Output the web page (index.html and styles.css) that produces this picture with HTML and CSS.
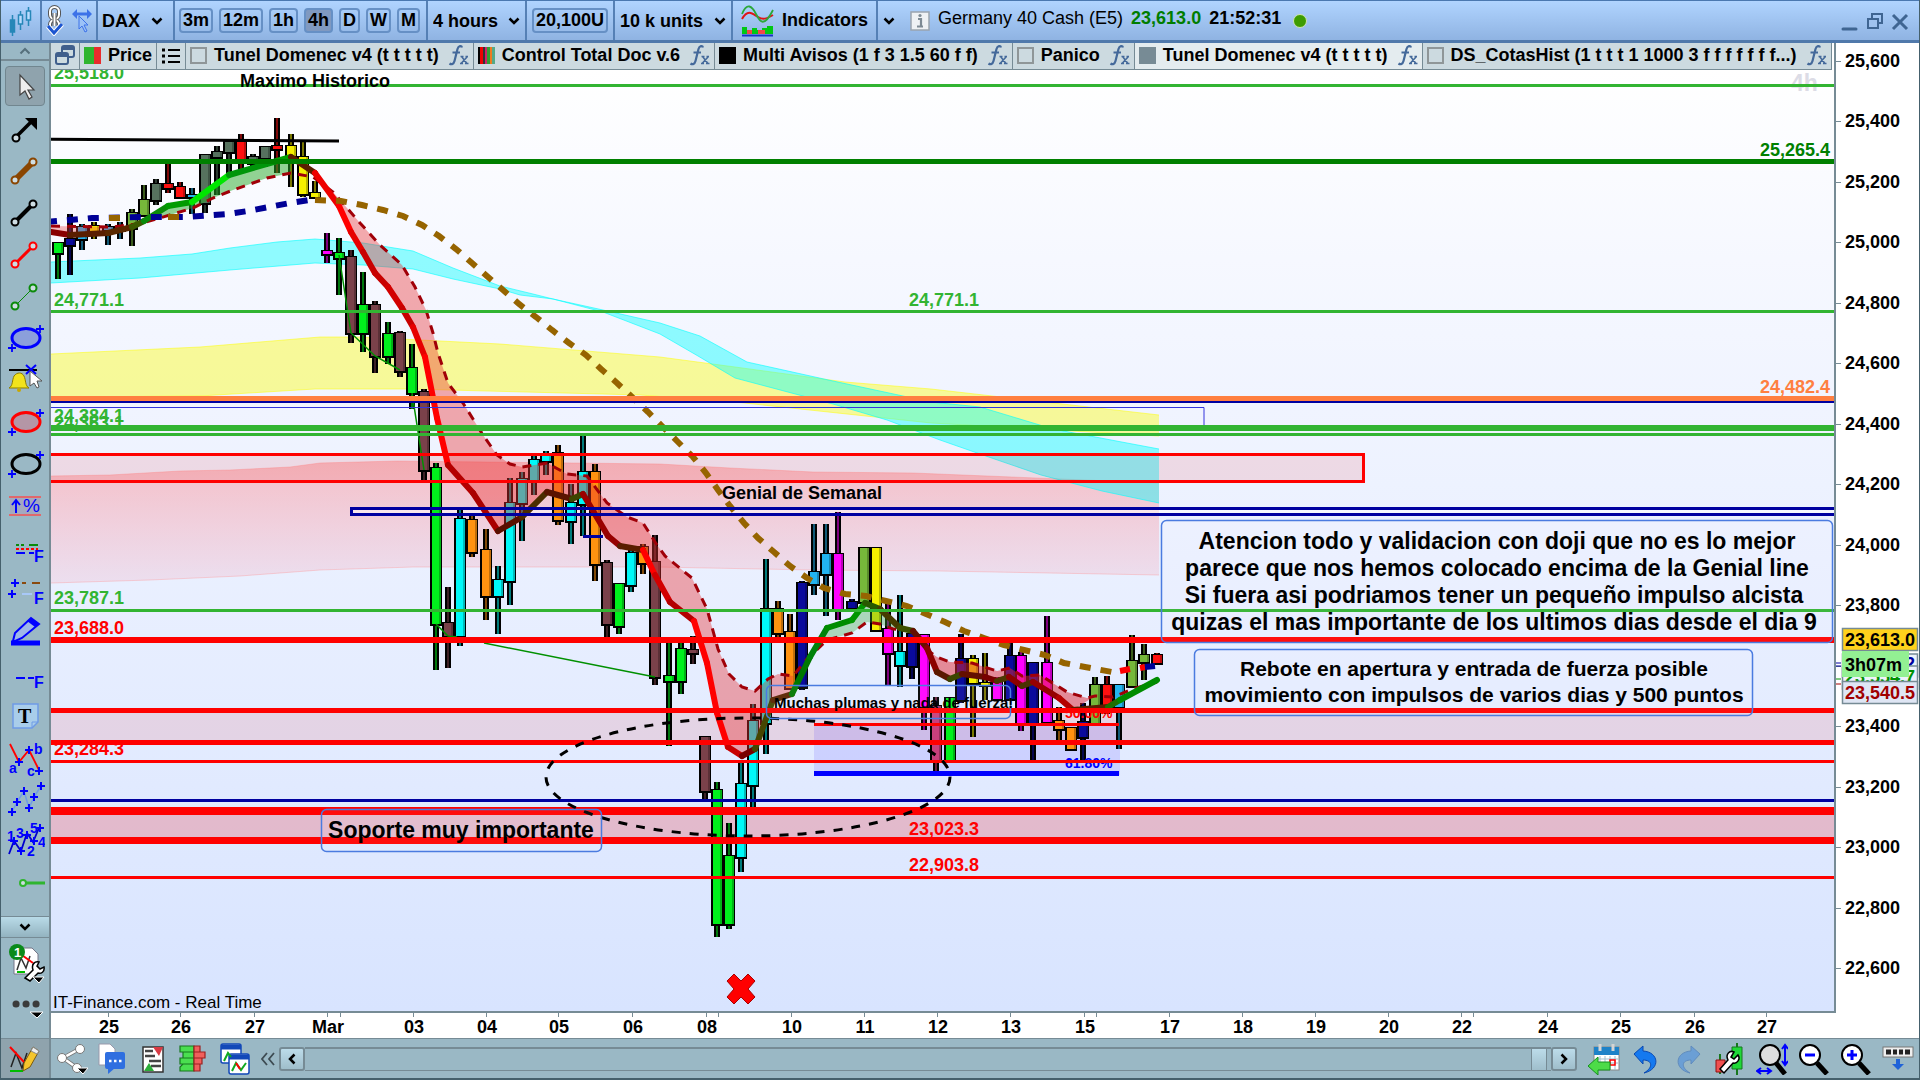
FILE: index.html
```html
<!DOCTYPE html>
<html lang="en">
<head>
  <meta charset="UTF-8" />
  <meta name="viewport" content="width=device-width, initial-scale=1.0"/>
  <title>DAX - 4 hours</title>
  <link rel="stylesheet" href="styles.css">
</head>
<body>
  <!-- shared icons -->
  <svg class="defs" aria-hidden="true">
    <symbol id="chev" viewBox="0 0 12 8"><path d="M1.500 1.500l4.500 4.500 4.500-4.500" fill="none" stroke="#000" stroke-width="2.500"/></symbol>
    <symbol id="fx" viewBox="0 0 21 22">
      <path d="M14 3.500c-.5-2-3.500-2-4.500 1.500L6.500 17c-.8 3-3 4-5 2.500M4.500 8.500h7.500" fill="none" stroke="#44699a" stroke-width="2.200"/>
      <path d="M13.500 12.500l5.500 7M19.500 12.500l-6.500 7M12.500 12.500h3M17.500 12.500h2.500M12 19.500h3M17 19.500h3.500" stroke="#44699a" stroke-width="1.500"/>
    </symbol>
    <symbol id="segment" viewBox="0 0 40 40">
      <path d="M12 28L28 12" stroke="currentColor"/>
      <circle cx="10" cy="30" r="3.500" fill="#cfdde3" stroke="currentColor" stroke-width="2"/>
      <circle cx="28" cy="12" r="3.500" fill="#cfdde3" stroke="currentColor" stroke-width="2"/>
    </symbol>
    <symbol id="ellipse" viewBox="0 0 40 40">
      <ellipse cx="21" cy="20" rx="14" ry="9.500" stroke="currentColor" stroke-width="3"/>
      <path d="M35 7v8M31 11h8M7 26v8M3 30h8" stroke="#00f" stroke-width="1.800"/>
    </symbol>
  </svg>

  <div class="app">
    <!-- top bar -->
    <header class="topbar">
      <button class="seg seg-logo" aria-label="Chart">
        <svg width="24" height="30" viewBox="0 0 24 30" stroke="#2687b8" stroke-width="1.500"><path d="M3.500 9v21M11.500 5v19M19.500 1v19"/><rect x="1.500" y="14" width="4" height="12" fill="#2687b8"/><rect x="9.500" y="9" width="4" height="9" fill="#b8dcff"/><rect x="17.500" y="5" width="4" height="9" fill="#b8dcff"/></svg>
      </button>
      <div class="seg seg-link">
        <button aria-label="Link"><svg width="18" height="31" viewBox="0 0 18 31" fill="none">
          <rect x="4" y="2" width="9" height="12" rx="4.500" stroke="#555" stroke-width="4"/><rect x="4" y="15" width="9" height="11" rx="4.500" stroke="#555" stroke-width="4"/>
          <rect x="4" y="2" width="9" height="12" rx="4.500" stroke="#fff" stroke-width="2"/><rect x="4" y="15" width="9" height="11" rx="4.500" stroke="#fff" stroke-width="2"/>
          <path d="M8.500 8v13" stroke="#555" stroke-width="4"/><path d="M8.500 8v13" stroke="#fff" stroke-width="2"/>
          <path d="M2 21l6 7 8-9" stroke="#fff" stroke-width="5"/><path d="M2 21l6 7 8-9" stroke="#1c55d0" stroke-width="3"/></svg></button>
        <button aria-label="Cursor sync"><svg width="22" height="26" viewBox="0 0 22 26"><path d="M1 6l5-5v3.500h10V1l5 5-5 5V7.500H6V11z" fill="#3d72e8"/><path d="M8 8v13l3-3 3 6 2-1-3-6h4z" fill="#9cc2f7" stroke="#3d72e8"/></svg></button>
      </div>
      <label class="seg seg-dax"><select aria-label="Instrument"><option>DAX</option></select><svg class="chev"><use href="#chev"/></svg></label>
      <div class="seg frames">
        <button class="frame">3m</button>
        <button class="frame">12m</button>
        <button class="frame">1h</button>
        <button class="frame on">4h</button>
        <button class="frame">D</button>
        <button class="frame">W</button>
        <button class="frame">M</button>
      </div>
      <label class="seg seg-tf"><select aria-label="Timeframe"><option>4 hours</option></select><svg class="chev"><use href="#chev"/></svg></label>
      <div class="seg seg-qty"><button class="frame">20,100U</button></div>
      <label class="seg seg-units"><select aria-label="Units"><option>10 k units</option></select><svg class="chev"><use href="#chev"/></svg></label>
      <button class="seg seg-ind">
        <svg width="33" height="32" viewBox="0 0 33 32"><path d="M1 14C7 3 12 9 17 12s8 2 15-2" fill="none" stroke="#e01515" stroke-width="2"/><path d="M1 9C6-3 11 1 15 9s8 14 17-4" fill="none" stroke="#2ba83a" stroke-width="1.800"/><path d="M1 22h5v3h5v-2h5v2h5v-2h5v-2h6v8H1z" fill="#00c814"/><path d="M6 25h5v4H6zM17 25h7v4h-7z" fill="#f04848"/><path d="M1 30.500h31" stroke="#1733c8" stroke-width="2"/></svg>
        Indicators
      </button>
      <button class="seg-more" aria-label="More indicators"><svg class="chev"><use href="#chev"/></svg></button>
      <div class="quote">
        <svg width="20" height="20" viewBox="0 0 20 20"><rect x="1" y="1" width="18" height="18" fill="#eef1f4" stroke="#9aa4ae" stroke-width="1.500"/><path d="M8 8h3v7M7 15.500h6" fill="none" stroke="#7d8a94" stroke-width="2.200"/><circle cx="10" cy="4.500" r="1.600" fill="#7d8a94"/></svg>
        <span>Germany 40 Cash (E5)</span>
        <b class="up">23,613.0</b>
        <b>21:52:31</b>
        <i class="led"></i>
      </div>
      <div class="winbtns">
        <button aria-label="Minimize"><svg width="18" height="20" viewBox="0 0 18 20"><path d="M2 18h13" stroke="#3f6592" stroke-width="3" stroke-linecap="round"/></svg></button>
        <button aria-label="Restore"><svg width="18" height="20" viewBox="0 0 18 20" fill="none" stroke="#3f6592" stroke-width="2"><rect x="6" y="3" width="10" height="9"/><rect x="2" y="8" width="10" height="9" fill="#a0c2ee"/></svg></button>
        <button aria-label="Close"><svg width="18" height="20" viewBox="0 0 18 20"><path d="M2 4l14 14M16 4L2 18" stroke="#3f6592" stroke-width="3"/></svg></button>
      </div>
    </header>

    <!-- drawing tools -->
    <nav class="tools">
      <button class="scroll-up" aria-label="Scroll up"><svg width="12" height="8" viewBox="0 0 12 8"><path d="M1.500 6.500L6 2l4.500 4.500" fill="none" stroke="#56707c" stroke-width="2"/></svg></button>
      <div class="tool-list">
        <button class="tool on" aria-label="Pointer"><svg viewBox="0 0 40 40"><path d="M15 9v20l5-4 4 8 3-2-4-7h6z" fill="#eee" stroke="#444" stroke-width="1.200"/></svg></button>
        <button class="tool" aria-label="Arrow"><svg viewBox="0 0 40 40"><path d="M12 28L28 12" stroke="#000" stroke-width="3.500"/><path d="M20 10h12v12z"/><circle cx="11" cy="30" r="3.500" fill="#cfdde3" stroke="#000" stroke-width="2"/></svg></button>
        <button class="tool w5 brown" aria-label="Segment"><svg><use href="#segment"/></svg></button>
        <button class="tool w4 black" aria-label="Segment"><svg><use href="#segment"/></svg></button>
        <button class="tool w3 red" aria-label="Segment"><svg><use href="#segment"/></svg></button>
        <button class="tool w2 green" aria-label="Segment"><svg><use href="#segment"/></svg></button>
        <button class="tool blue" aria-label="Ellipse"><svg fill="#8b9fdb"><use href="#ellipse"/></svg></button>
        <button class="tool" aria-label="Alert"><svg viewBox="0 0 40 40"><path d="M4 10h28" stroke="#000" stroke-width="2"/><path d="M4 28c4-2 3-8 5-12 3-4 8-4 10 0 2 4 1 10 5 12z" fill="#f2e31c" stroke="#8d7c00"/><circle cx="14" cy="30" r="2" fill="#c8a800"/><path d="M21 5l10 9M31 5L21 14" stroke="#00f" stroke-width="2"/><path d="M25 11v15l4-3 3 5 2-1-2-6h5z" fill="#fff" stroke="#555"/></svg></button>
        <button class="tool red" aria-label="Ellipse"><svg fill="#b496a6"><use href="#ellipse"/></svg></button>
        <button class="tool black" aria-label="Ellipse"><svg fill="none"><use href="#ellipse"/></svg></button>
        <button class="tool" aria-label="Percent"><svg viewBox="0 0 40 40"><path d="M5 11h30v18H5z" fill="#a4a9be"/><path d="M4 11h32M4 29h32" stroke="#e0686c" stroke-width="2"/><path d="M11 27V15M7 19l4-5 4 5" fill="none" stroke="#00f" stroke-width="2"/><text x="18" y="26" class="t-pct">%</text></svg></button>
        <button class="tool" aria-label="Fibonacci"><svg viewBox="0 0 40 40"><path d="M11 17h22" stroke="#0a8a0a" stroke-width="2" stroke-dasharray="3 2 3 5 9 2"/><path d="M11 21h22" stroke="#f00" stroke-width="2" stroke-dasharray="3 2"/><path d="M11 25h18" stroke="#00f" stroke-width="2" stroke-dasharray="9 4"/><text x="29" y="34" class="t-f">F</text></svg></button>
        <button class="tool" aria-label="Fibonacci fan"><svg viewBox="0 0 40 40"><path d="M10 9v8M6 13h8M7 20v8M3 24h8" stroke="#00f" stroke-width="2"/><path d="M17 13h4M27 13h8" stroke="#8a4a0f" stroke-width="2"/><path d="M17 24h10" stroke="#a8c8f8" stroke-width="2"/><text x="29" y="34" class="t-f">F</text></svg></button>
        <button class="tool" aria-label="Highlighter"><svg viewBox="0 0 40 40"><path d="M8 29l2-8L26 6l8 6-17 14-9 4z" fill="#9fb8e8" stroke="#00f" stroke-width="2"/><path d="M26 6l8 6-4 3-8-6z" fill="#00f"/><path d="M6 31h29" stroke="#00f" stroke-width="5"/></svg></button>
        <button class="tool" aria-label="Line F"><svg viewBox="0 0 40 40"><path d="M11 24h9M23 24h6" stroke="#00f" stroke-width="2"/><text x="29" y="34" class="t-f">F</text></svg></button>
        <button class="tool" aria-label="Text"><svg viewBox="0 0 40 40"><path d="M8 8h25v18l-6 6H8z" fill="#a9cdea" stroke="#6f9be6" stroke-width="1.500"/><path d="M27 32v-6h6" fill="none" stroke="#6f9be6"/><text x="13" y="27" class="t-t">T</text></svg></button>
        <button class="tool" aria-label="ABC"><svg viewBox="0 0 40 40"><path d="M5 6l9 18 10-12 10 20" fill="none" stroke="#f00" stroke-width="1.800"/><path d="M14 20v8M10 24h8M24 8v8M20 12h8M34 29v8M30 33h8" stroke="#00f" stroke-width="2"/><text x="4" y="35" class="t-s">a</text><text x="29" y="16" class="t-s">b</text><text x="22" y="38" class="t-s">c</text></svg></button>
        <button class="tool" aria-label="Zigzag"><svg viewBox="0 0 40 40"><path d="M7 32l5-10 7-11 5 17 5-11 7-11" fill="none" stroke="#6f9be6" stroke-width="1.500"/><path d="M7 28v8M3 32h8M12 18v8M8 22h8M19 7v8M15 11h8M24 24v8M20 28h8M29 13v8M25 17h8M36 2v8M32 6h8" stroke="#00f" stroke-width="2"/></svg></button>
        <button class="tool" aria-label="Elliott"><svg viewBox="0 0 40 40"><path d="M4 32l5-13 7 10 6-18 6 9 6-14" fill="none" stroke="#00c" stroke-width="1.800"/><path d="M9 15v8M5 19h8M16 25v8M12 29h8M35 2v8M31 6h8M22 9v8M18 13h8M29 15v8M25 19h8" stroke="#00f" stroke-width="2"/><text x="2" y="19" class="t-s">1</text><text x="11" y="16" class="t-s">3</text><text x="25" y="11" class="t-s">5</text><text x="22" y="34" class="t-s">2</text><text x="33" y="25" class="t-s">4</text></svg></button>
        <button class="tool" aria-label="Level"><svg viewBox="0 0 40 40"><path d="M21 19h19" stroke="#2fb52f" stroke-width="3"/><circle cx="18" cy="19" r="3" fill="#cfdde3" stroke="#2fb52f" stroke-width="2"/></svg></button>
      </div>
      <button class="scroll-down" aria-label="Scroll down"><svg class="chev"><use href="#chev"/></svg></button>
      <button class="tool" aria-label="Objects"><svg viewBox="0 0 40 40"><path d="M9 4h18l6 6v20H9z" fill="#fff" stroke="#778"/><path d="M12 26l4-12 5 10 4-12" fill="none" stroke="#333" stroke-width="1.500"/><path d="M12 28h8" stroke="#0b0" stroke-width="2"/><path d="M14 9l14 10" stroke="#f00" stroke-width="2"/><circle cx="12" cy="8" r="8" fill="#0a8a1a"/><text x="9" y="13" class="t-one">1</text><path d="M20 34l8-8c-2-6 2-9 6-8l-2 4 3 3 4-2c1 5-3 7-6 6l-8 8z" fill="#fff" stroke="#000" stroke-width="1.500"/><path d="M28 33h11l-5 6z" stroke="#fff"/></svg></button>
      <button class="tool" aria-label="More"><svg viewBox="0 0 40 40"><path d="M11 13h.1M21 13h.1M31 13h.1" stroke="#3b3b3b" stroke-width="7" stroke-linecap="round"/><path d="M25 21h13l-6 6z" stroke="#fff"/></svg></button>
    </nav>

    <!-- chart -->
    <main class="main">
      <div class="tabs">
        <button class="tab" aria-label="Windows"><svg width="20" height="20" viewBox="0 0 20 20" fill="#cddbe0" stroke="#3f5f8c" stroke-width="2"><rect x="7" y="1" width="12" height="11" rx="2"/><path d="M7 3h12" stroke-width="4"/><rect x="1" y="8" width="12" height="11" rx="2"/><path d="M1 10h12" stroke-width="4"/></svg></button>
        <button class="tab"><i class="sw sw-price"></i>Price</button>
        <button class="tab" aria-label="List"><svg width="20" height="18" viewBox="0 0 20 18"><path d="M1 4h3M1 10h3M1 16h3" stroke="#000" stroke-width="3"/><path d="M7 4h12M7 10h12M7 16h12" stroke="#000" stroke-width="2"/></svg></button>
        <button class="tab"><i class="sw"></i>Tunel Domenec v4 (t t t t t)<svg class="fx"><use href="#fx"/></svg></button>
        <button class="tab"><i class="sw sw-bars"></i>Control Total Doc v.6<svg class="fx"><use href="#fx"/></svg></button>
        <button class="tab"><i class="sw sw-black"></i>Multi Avisos (1 f 3 1.5 60 f f)<svg class="fx"><use href="#fx"/></svg></button>
        <button class="tab"><i class="sw"></i>Panico<svg class="fx"><use href="#fx"/></svg></button>
        <button class="tab active"><i class="sw sw-grey"></i>Tunel Domenec v4 (t t t t t)<svg class="fx"><use href="#fx"/></svg></button>
        <button class="tab"><i class="sw"></i>DS_CotasHist (1 t t t 1 1000 3 f f f f f f f...)<svg class="fx"><use href="#fx"/></svg></button>
      </div>
      <svg class="chart" id="chart" role="img" aria-label="DAX 4 hours chart"></svg>
      <svg class="dates" id="dates"></svg>
    </main>
    <svg class="prices" id="prices"></svg>

    <!-- bottom bar -->
    <footer class="bottombar">
      <button class="draw" aria-label="Draw"><svg width="32" height="28" viewBox="0 0 32 28"><path d="M2 22l5-14 6 15 5-15" fill="none" stroke="#222" stroke-width="1.500"/><path d="M1 2l14 15" stroke="#f00" stroke-width="2"/><path d="M1 26h13" stroke="#0b0" stroke-width="2"/><path d="M15 18L24 2l6 4-9 16-7 4z" fill="#f5c52c" stroke="#7a5a10"/><path d="M24 2l6 4-2 3-6-3z" fill="#eee" stroke="#888"/></svg></button>
      <button class="bb" aria-label="Share"><svg viewBox="0 0 32 32"><path d="M25 5L7 15l14 10" fill="none" stroke="#777" stroke-width="4"/><path d="M25 5L7 15l14 10" fill="none" stroke="#fff" stroke-width="2.500"/><g fill="#fff" stroke="#777"><circle cx="24" cy="6" r="4.500"/><circle cx="6" cy="15" r="4.500"/><circle cx="21" cy="25" r="4.500"/></g><path d="M21 25h11l-5 6z" stroke="#fff"/></svg></button>
      <button class="bb" aria-label="Chat"><svg viewBox="0 0 32 32"><path d="M2 1h11l5 5v16H2z" fill="#fff" stroke="#99a"/><rect x="8" y="9" width="20" height="17" rx="2" fill="#2f6fe0"/><path d="M11 25v6l7-6z" fill="#2f6fe0"/><path d="M12 18h2.500M17 18h2.500M22 18h2.500" stroke="#fff" stroke-width="2.500"/></svg></button>
      <button class="bb" aria-label="Orders"><svg viewBox="0 0 32 32"><rect x="5" y="4" width="20" height="25" fill="#fff" stroke="#333" stroke-width="1.500"/><path d="M7 8h8M7 13h10M11 18h12M13 23h10" stroke="#444" stroke-width="2.500"/><path d="M15 4h10l-4 9z" fill="#d83a44"/><path d="M6 28l5-8 5 8z" fill="#2cae3a"/></svg></button>
      <button class="bb" aria-label="Order book"><svg viewBox="0 0 32 32" stroke-width="1.200"><path d="M1 3h14v6H1zM4 9h11v6H4zM1 15h14v6H1zM4 21h11v7H1v-4z" fill="#4ade50" stroke="#17771e"/><path d="M15 3h6v6h-6zM15 9h11v6H15zM15 15h8v6h-8zM15 21h6v7h-6z" fill="#f0605c" stroke="#9b2020"/></svg></button>
      <button class="bb" aria-label="Windows"><svg viewBox="0 0 32 32"><g stroke="#1248b8" stroke-width="1.500"><rect x="1" y="1" width="20" height="19" rx="2" fill="#fff"/><path d="M1 4h20" stroke-width="5"/><rect x="9" y="11" width="20" height="20" rx="2" fill="#fff"/><path d="M9 14h20" stroke-width="5"/></g><path d="M4 18l4-8 3 4M12 28l4-8 5 7 5-7" fill="none" stroke="#10a820" stroke-width="2"/><path d="M16 20l4 6" stroke="#f00" stroke-width="2"/></svg></button>
      <button class="fold" aria-label="Collapse"><svg width="14" height="14" viewBox="0 0 14 14"><path d="M6 1L1 7l5 6M13 1L8 7l5 6" fill="none" stroke="#3d4b52" stroke-width="1.800"/></svg></button>
      <div class="scrollbar">
        <button aria-label="Scroll left"><svg width="8" height="12" viewBox="0 0 8 12"><path d="M6.500 1.500L2 6l4.500 4.500" fill="none" stroke="#000" stroke-width="2.500"/></svg></button>
        <div class="track"><span class="thumb"></span></div>
        <button aria-label="Scroll right"><svg width="8" height="12" viewBox="0 0 8 12"><path d="M1.500 1.500L6 6l-4.500 4.500" fill="none" stroke="#000" stroke-width="2.500"/></svg></button>
      </div>
      <div class="actions">
        <button class="bb" aria-label="Go to date"><svg viewBox="0 0 32 32"><rect x="6" y="4" width="25" height="23" fill="#fff" stroke="#888"/><path d="M6 4h25v8H6z" fill="#1e82c8"/><path d="M12 1v7M25 1v7" stroke="#d4d4d4" stroke-width="3"/><path d="M8 16h22M8 20h22M12 13v14M17 13v14M22 13v14M27 13v14" stroke="#a0bfce"/><rect x="22" y="17" width="5" height="5" fill="none" stroke="#f00" stroke-width="1.500"/><path d="M0 23l10-9v5h12v8H10v5z" fill="#4ddb48" stroke="#179020"/></svg></button>
        <button class="bb" aria-label="Undo"><svg viewBox="0 0 32 32"><path d="M4 11L13 3v5c16 1 18 18 1 22 10-6 8-13-1-13v4z" fill="#1479f0" stroke="#0b49b0"/></svg></button>
        <button class="bb faded" aria-label="Redo"><svg viewBox="0 0 32 32"><path d="M28 11L19 3v5C3 9 1 26 18 30c-10-6-8-13 1-13v4z" fill="#4c90e0" stroke="#3b6fb8"/></svg></button>
        <button class="bb" aria-label="Chart settings"><svg viewBox="0 0 32 32"><path d="M23 0v32M6 11v20" stroke="#17771e" stroke-width="2"/><path d="M18 4h10v22H18z" fill="#20d838" stroke="#17771e"/><path d="M2 17h9v12H2z" fill="#f05050" stroke="#901010"/><path d="M6 26l8-9c-3-6 2-10 6-8l-3 5 3 2 4-4c3 4-1 9-5 8l-9 10z" fill="#fff" stroke="#000" stroke-width="1.500"/></svg></button>
        <button class="bb" aria-label="Zoom fit"><svg viewBox="0 0 32 32"><path d="M20 20l9 11" stroke="#000" stroke-width="5"/><circle cx="14" cy="12" r="10" fill="#ddd" stroke="#000" stroke-width="2"/><path d="M29 3v18M26 6l3-4 3 4M26 18l3 4 3-4M1 28h14M5 25l-4 3 4 3M11 25l4 3-4 3" fill="none" stroke="#00f" stroke-width="2"/></svg></button>
        <button class="bb" aria-label="Zoom out"><svg viewBox="0 0 32 32"><path d="M19 20l10 11" stroke="#000" stroke-width="5"/><circle cx="12" cy="12" r="10" fill="#fff" stroke="#000" stroke-width="2"/><path d="M7 12h10" stroke="#00f" stroke-width="3"/></svg></button>
        <button class="bb" aria-label="Zoom in"><svg viewBox="0 0 32 32"><path d="M19 20l10 11" stroke="#000" stroke-width="5"/><circle cx="12" cy="12" r="10" fill="#fff" stroke="#000" stroke-width="2"/><path d="M7 12h10M12 7v10" stroke="#00f" stroke-width="3"/></svg></button>
        <button class="bb" aria-label="Hide bar"><svg viewBox="0 0 32 32"><rect x="1" y="4" width="30" height="10" fill="#eee" stroke="#777"/><path d="M4 9h5M11 9h4M17 9h4M23 9h5" stroke="#222" stroke-width="5"/><path d="M16 16v7" stroke="#1f62d8" stroke-width="4"/><path d="M10 21h12l-6 6z" fill="#1f62d8"/></svg></button>
      </div>
    </footer>
  </div>

  <script src="chart.js"></script>
</body>
</html>
```
FILE: styles.css
```css
html, body {
  margin: 0;
  padding: 0;
  height: 100%;
}

body {
  font-family: "Liberation Sans", Arial, sans-serif;
  font-size: 18px;
  font-weight: bold;
  color: #000;
  overflow: hidden;
}

button, select {
  font: inherit;
  color: inherit;
  margin: 0;
  padding: 0;
  border: 0;
  background: none;
  appearance: none;
  white-space: nowrap;
}

button {
  display: flex;
  align-items: center;
  justify-content: center;
}

svg {
  display: block;
  flex: none;
}

.defs {
  width: 0;
  height: 0;
  position: absolute;
}

.app {
  box-sizing: border-box;
  height: 100vh;
  display: grid;
  grid-template: 43px 1fr 40px / 50px 1fr 85px;
  border: solid #45606c;
  border-width: 0 1px 2px 1px;
  background: #9ab8c5;
}

.chev {
  width: 12px;
  height: 8px;
}

/* top bar */
.topbar {
  grid-column: 1 / -1;
  box-sizing: border-box;
  display: flex;
  background: linear-gradient(#b0d4ff, #8fb3e2);
  border-top: 1px solid #4a78b0;
  border-bottom: 3px solid #5079ab;
}

.seg {
  box-sizing: border-box;
  display: flex;
  align-items: center;
  border-right: 2px solid #5580b5;
}

.seg-logo {
  width: 41px;
}

.seg-link {
  width: 56px;
  justify-content: space-around;
}

.seg-dax {
  width: 77px;
  padding: 0 4px;
  gap: 10px;
}

.frames {
  width: 253px;
  gap: 6px;
  padding-left: 4px;
}

.frame {
  box-sizing: border-box;
  height: 25px;
  padding: 0 2px;
  border: 2px solid #6690c5;
  border-radius: 4px;
}

.frame.on {
  background: #8099c0;
}

.seg-tf {
  width: 99px;
  padding: 0 5px;
  justify-content: space-between;
}

.seg-qty {
  width: 88px;
  justify-content: center;
}

.seg-units {
  width: 118px;
  padding: 0 5px;
  justify-content: space-between;
}

.seg-ind {
  width: 145px;
  justify-content: center;
  gap: 8px;
}

.seg-more {
  width: 22px;
}

.quote {
  display: flex;
  align-items: center;
  gap: 8px;
  padding-left: 10px;
  font-weight: normal;
}

.quote b, .quote span {
  line-height: 22px;
  padding-bottom: 5px;
}

.up {
  color: #007d00;
}

.led {
  width: 12px;
  height: 12px;
  margin-left: 4px;
  border: 1px solid #cfe6b0;
  border-radius: 50%;
  background: #3d9c00;
}

.winbtns {
  display: flex;
  align-items: center;
  gap: 7px;
  margin-left: auto;
  padding-right: 10px;
}

/* left tools */
.tools {
  box-sizing: border-box;
  display: flex;
  flex-direction: column;
  align-items: center;
  border-right: 2px solid #768b95;
  overflow: hidden;
}

.scroll-up {
  flex: none;
  width: 100%;
  height: 18px;
  border-bottom: 2px solid #768b95;
}

.tool-list {
  flex: 1;
  min-height: 0;
  overflow: hidden;
  display: flex;
  flex-direction: column;
  gap: 2px;
  padding-top: 5px;
}

.tool {
  box-sizing: border-box;
  flex: none;
  width: 40px;
  height: 40px;
}

.tool svg {
  width: 40px;
  height: 40px;
}

.tool.on {
  border: 1px solid #71868f;
  border-radius: 4px;
  background: #8fa3ad;
}

.tool.w5 { stroke-width: 6px; }
.tool.w4 { stroke-width: 4px; }
.tool.w3 { stroke-width: 3px; }
.tool.w2 { stroke-width: 1px; }
.brown { color: #8a4500; }
.black { color: #000; }
.red { color: #f00; }
.green { color: #0a8a0a; }
.blue { color: #00f; }

.t-f, .t-s, .t-pct { fill: #00f; }
.t-f { font-size: 16px; }
.t-s { font-size: 14px; }
.t-pct { font-size: 19px; font-weight: normal; }
.t-t { font: bold 20px "Liberation Serif", serif; }
.t-one { font-size: 13px; fill: #fff; }

.scroll-down {
  box-sizing: border-box;
  flex: none;
  width: 100%;
  height: 22px;
  margin-bottom: 6px;
  border: solid #768b95;
  border-width: 1px 0;
  background: linear-gradient(#b9dbe8, #93b3c0);
}

.tools > .tool {
  margin-bottom: 7px;
}

/* chart column */
.main {
  min-width: 0;
  min-height: 0;
  display: grid;
  grid-template-rows: 27px 1fr 27px;
  background: #fff;
}

.tabs {
  display: flex;
  min-width: 0;
  overflow: hidden;
}

.tab {
  box-sizing: border-box;
  flex: none;
  height: 27px;
  padding: 0 4px 2px;
  gap: 7px;
  border-right: 1px solid #768b95;
  border-bottom: 1px solid #768b95;
  background: #ccdae0;
  line-height: 24px;
}

.tab.active {
  background: #e4ecef;
}

.fx {
  width: 21px;
  height: 22px;
  margin-left: 2px;
}

.sw {
  box-sizing: border-box;
  width: 17px;
  height: 17px;
  border: 2px solid #8f9698;
}

.sw-price {
  border: 0;
  background: linear-gradient(90deg, #2fb52f 60%, #e82c2c 60%);
}

.sw-black {
  border: 0;
  background: #000;
}

.sw-grey {
  border: 0;
  background: #778b95;
}

.sw-bars {
  border: 0;
  background: linear-gradient(90deg, #000 0 12%, #e00 12% 30%, #333 30% 40%, #d0206a 40% 54%, #2fa02f 54% 68%, #f07a20 68% 84%, #5a8 84%);
}

.chart {
  width: 100%;
  height: 100%;
  background: linear-gradient(#fff, #f6f8ff 20%, #d8e4ff);
}

.dates {
  width: 100%;
  height: 27px;
}

.prices {
  width: 85px;
  height: 100%;
  background: #fff;
}

.plain {
  font-size: 17px;
  font-weight: normal;
}

.note { font-size: 23px; text-anchor: middle; }
.note2 { font-size: 21px; text-anchor: middle; }
.small { font-size: 15px; }
.pct { font-size: 14px; }
.mark { font-size: 23px; }
.mid { text-anchor: middle; }

/* bottom bar */
.bottombar {
  grid-column: 1 / -1;
  box-sizing: border-box;
  display: flex;
  align-items: center;
  border-top: 1px solid #768b95;
}

.draw {
  box-sizing: border-box;
  width: 50px;
  height: 100%;
  border-right: 2px solid #768b95;
  background: #8fa3ad;
}

.bb {
  flex: none;
  width: 41px;
  height: 36px;
}

.bb svg {
  width: 32px;
  height: 32px;
}

.actions {
  display: flex;
}

.actions .bb {
  width: 42px;
}

.faded {
  opacity: .6;
}

.fold {
  width: 23px;
}

.scrollbar {
  flex: 1;
  display: flex;
  height: 24px;
  margin-right: 6px;
}

.scrollbar button {
  box-sizing: border-box;
  width: 26px;
  border: 2px solid #768b95;
  border-radius: 3px;
  background: linear-gradient(#bcdcea, #9fbecb);
}

.track {
  flex: 1;
  display: flex;
  justify-content: flex-end;
  padding-right: 4px;
  border: solid #768b95;
  border-width: 2px 0 1px;
}

.thumb {
  width: 14px;
  border: solid #768b95;
  border-width: 0 1px;
  background: linear-gradient(#bcdcea, #9fbecb);
}
```
FILE: chart.js
```js
const NS = 'http://www.w3.org/2000/svg';
const chart = document.getElementById('chart');
const dates = document.getElementById('dates');
const prices = document.getElementById('prices');

function add(parent, tag, attrs, text) {
  const el = document.createElementNS(NS, tag);
  for (const k in attrs) el.setAttribute(k, attrs[k]);
  if (text) el.textContent = text;
  parent.appendChild(el);
  return el;
}

// screen coordinates -> chart coordinates
const g = add(chart, 'g', { transform: 'translate(-51 -70)' });

const colors = {
  G: '#00f01c', N: '#0a0a9c', B: '#22b4f0', Y: '#f5f000', L: '#76b83a', D: '#56725e',
  R: '#ff1010', M: '#ff00ff', W: '#7a414a', C: '#00f8f8', O: '#ff9210', K: '#c8407c'
};

// x, body top, body bottom, high, low, colour
const candles = [
  [58,243,253,242,279,'G'],[70,239,245,214,275,'N'],[82,227,239,224,250,'B'],[94,226,231,222,239,'Y'],
  [108,227,230,224,245,'B'],[120,227,230,222,239,'B'],[132,213,228,209,246,'L'],[144,200,215,185,217,'L'],
  [156,184,200,179,205,'D'],[168,184,188,163,193,'R'],[180,187,197,182,199,'R'],[192,195,197,188,214,'B'],
  [205,155,203,154,213,'D'],[217,152,157,146,195,'D'],[229,142,152,140,175,'D'],[241,142,159,134,170,'R'],
  [253,157,163,154,167,'D'],[265,147,158,146,167,'D'],[277,146,149,118,173,'R'],[291,146,156,134,187,'Y'],
  [303,157,194,142,197,'Y'],[315,193,197,181,198,'Y'],[327,251,254,233,263,'M'],[339,253,258,238,295,'G'],
  [351,257,333,250,343,'W'],[363,305,333,272,352,'G'],[375,305,356,301,373,'W'],[388,334,356,322,364,'G'],
  [400,333,371,331,377,'W'],[412,368,393,344,409,'G'],[424,392,470,389,480,'W'],[436,468,624,463,670,'G'],
  [448,623,636,587,668,'W'],[460,519,636,510,646,'C'],[472,520,552,516,557,'O'],[486,550,596,529,620,'O'],
  [498,580,596,566,634,'C'],[510,503,581,478,605,'C'],[522,479,503,472,541,'C'],[534,460,480,456,495,'C'],
  [546,454,461,451,475,'C'],[558,453,520,445,525,'O'],[571,503,521,484,544,'C'],[583,472,504,436,536,'C'],
  [595,472,564,464,581,'O'],[607,563,624,560,643,'W'],[619,584,626,583,634,'G'],[631,553,585,550,592,'C'],
  [643,547,563,544,574,'O'],[655,562,677,535,685,'W'],[669,676,681,643,746,'G'],[681,649,681,643,694,'G'],
  [693,650,653,636,664,'W'],[705,737,791,736,799,'W'],[717,790,924,782,937,'G'],[729,856,924,823,929,'G'],
  [741,784,857,761,872,'C'],[753,721,785,704,809,'C'],[766,609,723,559,754,'C'],[778,609,633,601,637,'O'],
  [790,632,688,614,690,'O'],[802,583,687,581,690,'N'],[814,572,584,524,595,'B'],[826,554,574,524,616,'B'],
  [838,554,609,512,620,'M'],[852,602,608,599,610,'N'],[864,548,602,548,602,'L'],[876,548,630,548,632,'Y'],
  [888,629,653,599,685,'M'],[900,652,665,595,687,'C'],[912,634,666,634,679,'N'],[924,635,707,634,730,'M'],
  [936,706,760,697,772,'K'],[950,698,760,697,761,'G'],[961,659,700,634,703,'N'],[973,659,683,655,737,'Y'],
  [985,683,685,653,700,'Y'],[997,680,699,677,700,'M'],[1010,656,699,643,700,'N'],[1021,656,723,652,731,'M'],
  [1033,663,723,663,760,'N'],[1047,663,722,616,723,'M'],[1059,721,729,707,740,'O'],[1071,728,749,727,750,'O'],
  [1083,722,737,703,760,'N'],[1095,685,723,677,724,'L'],[1107,685,707,676,714,'R'],[1119,685,707,684,749,'B'],
  [1132,661,686,635,687,'L'],[1144,655,662,644,680,'L'],[1157,655,663,653,664,'R']
];

// last entry of each point is the colour of the segment that starts there
const trend = [
  [51,232,'#800'],[70,235,'#5a1e00'],[108,233,'#5a2800'],[132,227,'#3c5a00'],[144,221,'#0a8a0a'],[168,206,'#009b00'],
  [192,202,'#00e600'],[229,175,'#00960a'],[277,161,'#00a000'],[291,157,'#5a1e00'],[315,173,'#e00'],[339,206,'#f00'],
  [351,232,'#e60000'],[363,252,'#c80000'],[375,273,'#c80000'],[388,287,'#d20000'],[402,308,'#c80000'],[413,327,'#e60000'],
  [425,357,'#f00'],[437,418,'#f00'],[448,465,'#b40000'],[473,493,'#aa0000'],[498,531,'#5a0f00'],[522,517,'#4b2d00'],
  [547,492,'#5a1400'],[572,499,'#3c4600'],[583,494,'#9b0000'],[608,536,'#960000'],[620,546,'#5a1e00'],[643,550,'#f00'],
  [655,575,'#d20000'],[670,602,'#b40000'],[694,621,'#f00'],[707,663,'#f00'],[717,713,'#f00'],[728,747,'#c80000'],
  [742,756,'#780000'],[755,749,'#464600'],[773,700,'#5a2300'],[792,694,'#007800'],[810,657,'#00820a'],[827,628,'#008c00'],
  [852,620,'#009600'],[865,603,'#285a00'],[880,609,'#463c00'],[900,628,'#3c5000'],[913,631,'#640f00'],[927,648,'#8c0000'],
  [937,672,'#5a1900'],[950,679,'#3c4600'],[962,674,'#640f00'],[985,677,'#780000'],[997,681,'#4b3700'],[1009,677,'#8c0000'],
  [1022,686,'#4b3200'],[1033,682,'#960000'],[1059,698,'#b40000'],[1073,710,'#5a1e00'],[1108,707,'#1e6e00'],
  [1120,700,'#008c00'],[1157,680,'']
];

const signal = [
  [51,226],[113,227],[143,223],[193,208],[213,198],[233,190],[267,178],[291,173],[313,177],[333,192],[347,208],
  [360,223],[380,245],[402,265],[415,287],[426,310],[433,333],[438,353],[448,383],[463,403],[483,435],[497,455],
  [510,464],[522,467],[547,463],[567,474],[587,476],[607,503],[627,517],[643,523],[657,545],[665,556],[692,578],
  [707,609],[718,649],[729,674],[742,687],[755,691],[768,679],[778,674],[793,676],[807,659],[827,640],[852,633],
  [867,622],[880,624],[893,629],[913,631],[927,650],[937,657],[950,662],[972,663],[997,671],[1010,668],[1022,676],
  [1040,675],[1067,692],[1087,698],[1095,696],[1113,697],[1133,689],[1157,682]
];

const pts = a => a.map(p => p[0] + ',' + p[1]).join(' ');
const cut = (a, from, to) => a.filter(p => p[0] >= from && p[0] <= to);

function band(top, bottom, fill, stroke) {
  add(g, 'polygon', { points: pts(top.concat(bottom.slice().reverse())), fill });
  if (stroke) {
    add(g, 'polyline', { points: pts(top), fill: 'none', stroke });
    add(g, 'polyline', { points: pts(bottom), fill: 'none', stroke });
  }
}

function line(y, color, w, x1 = 0, x2 = '200%') {
  add(g, 'line', { x1, x2, y1: y, y2: y, stroke: color, 'stroke-width': w });
}

function label(x, y, text, fill, cls) {
  add(g, 'text', { x, y, fill: fill || '#000', class: cls || '' }, text);
}

// gradient of the pink zone
const defs = add(chart, 'defs', {});
function grad(id, a, b) {
  const lg = add(defs, 'linearGradient', { id, x1: 0, x2: 0, y1: 0, y2: 1 });
  add(lg, 'stop', { offset: 0, 'stop-color': a });
  add(lg, 'stop', { offset: 1, 'stop-color': b });
}
grad('pink', 'rgba(255,110,110,.38)', 'rgba(255,110,130,.13)');

// zones
band([[51,354],[200,347],[320,337],[360,337],[500,344],[660,357],[735,367],[845,382],[931,389],[1159,415]],
     [[51,397],[200,396],[315,389],[410,389],[640,395],[735,402],[931,423],[1159,436]], 'rgba(255,255,0,.4)', 'rgba(255,255,0,.5)');
band([[51,476],[110,475],[180,471],[230,470],[290,467],[320,463],[397,461],[660,464],[730,468],[813,472],[913,473],[1159,483]],
     [[51,583],[150,580],[240,576],[320,570],[413,567],[655,567],[813,570],[940,571],[1159,575]], 'url(#pink)', 'rgba(255,140,140,.35)');
band([[51,262],[140,258],[192,254],[230,248],[277,242],[315,239],[363,243],[413,251],[453,268],[500,286],[533,294],[553,299],[603,310],[660,323],[700,336],[747,362],[833,381],[931,402],[980,407],[1053,429],[1127,443],[1159,449]],
     [[51,283],[140,278],[230,270],[315,263],[363,265],[413,269],[453,279],[500,289],[520,295],[553,299],[603,312],[660,334],[698,356],[735,378],[833,404],[887,420],[940,440],[980,454],[1041,475],[1102,491],[1159,503]],
     'rgba(0,255,255,.42)', 'rgba(0,255,255,.6)');

add(g, 'rect', { x: 0, y: 454, width: 1363, height: 28, fill: 'rgba(240,0,0,.1)' });
add(g, 'rect', { x: 0, y: 711, width: '200%', height: 32, fill: 'rgba(240,0,0,.1)' });
add(g, 'rect', { x: 0, y: 811, width: '200%', height: 30, fill: 'rgba(240,0,0,.2)' });
add(g, 'rect', { x: 814, y: 724, width: 306, height: 51, fill: 'rgba(60,40,255,.13)' });
add(g, 'rect', { x: 350, y: 508, width: '200%', height: 6, fill: 'rgba(255,255,255,.5)' });

// candles
candles.forEach(([x, top, bottom, high, low, c]) => {
  add(g, 'rect', { x: x - 3, y: high, width: 6, height: low - high });
  add(g, 'rect', { x: x - .5, y: high, width: 1, height: low - high, fill: colors[c] });
  add(g, 'rect', { x: x - 6, y: top - 1, width: 12, height: bottom - top + 3 });
  add(g, 'rect', { x: x - 4, y: top, width: 9, height: bottom - top, fill: colors[c] });
  add(g, 'rect', { x: x + 3, y: top, width: 2, height: bottom - top, fill: 'rgba(0,0,0,.25)' });
});

// fill between the trend and its signal
band(cut(signal, 51, 130), cut(trend, 51, 130), 'rgba(240,60,60,.35)');
band(cut(signal, 143, 291), cut(trend, 143, 292), 'rgba(40,170,40,.5)');
band(cut(signal, 313, 793), cut(trend, 315, 792), 'rgba(235,50,50,.4)');
band(cut(signal, 807, 900), cut(trend, 810, 900), 'rgba(60,170,60,.35)');
band(cut(signal, 913, 1095), cut(trend, 913, 1100), 'rgba(225,40,50,.5)');

[[[339,255],[351,333],[375,356],[400,370]], [[412,393],[424,470]], [[436,624],[448,636],[457,637]], [[484,643],[655,677]]]
  .forEach(p => add(g, 'polyline', { points: pts(p), fill: 'none', stroke: '#009000', 'stroke-width': 1.5 }));

add(g, 'polyline', { points: pts(signal), fill: 'none', stroke: '#a00008', 'stroke-width': 3, 'stroke-dasharray': '9 7' });
for (let i = 0; i < trend.length - 1; i++) {
  const [x1, y1, stroke] = trend[i], [x2, y2] = trend[i + 1];
  add(g, 'line', { x1, y1, x2, y2, stroke, 'stroke-width': 6, 'stroke-linecap': 'round' });
}

// slow average
const slow = (p, stroke) => add(g, 'polyline', { points: pts(p), fill: 'none', stroke, 'stroke-width': 6, 'stroke-dasharray': '11 10' });
slow([[46,222],[70,220],[92,218],[147,217],[186,217],[228,214],[248,211],[290,203],[316,199]], '#000096');
slow([[109,218],[121,218]], '#966400');
slow([[168,217],[179,217]], '#966400');
slow([[315,200],[341,201],[362,205],[383,210],[403,216],[422,225],[439,236],[456,249],[472,263],[488,277],[503,290],[519,304],
  [536,317],[552,330],[569,343],[586,355],[601,369],[617,383],[632,397],[648,412],[661,425],[677,441],[693,457],[706,473],
  [718,490],[730,506],[744,523],[758,538],[774,552],[790,566],[807,578],[824,588],[845,594],[866,596],[886,601],[907,606],
  [926,614],[945,622],[964,631],[984,638],[1004,645],[1024,650],[1045,655],[1064,663],[1085,667],[1112,672]], '#966400');
slow([[1120,671],[1130,669]], '#f00');
slow([[1140,668],[1145,667]], '#f00');
slow([[1145,667],[1155,666]], '#000096');

// price labels go under the levels
label(54, 79, '25,518.0', '#32b432');
label(54, 306, '24,771.1', '#32b432');
label(909, 306, '24,771.1', '#32b432');
label(1760, 156, '25,265.4', '#008000');
label(1760, 393, '24,482.4', '#ff7f40');
label(54, 422, '24,384.1', '#32b432');
label(54, 429, '24,363.1', '#32b432');
label(54, 604, '23,787.1', '#32b432');
label(54, 634, '23,688.0', '#f00');
label(54, 755, '23,284.3', '#f00');
label(909, 835, '23,023.3', '#f00');
label(909, 871, '22,903.8', '#f00');
label(1065, 718, '50.00%', '#f00', 'pct');
label(1065, 768, '61.80%', '#00f', 'pct');
label(1791, 91, '4h', '#dcdce6', 'mark');

// levels
add(g, 'line', { x1: 0, y1: 139, x2: 339, y2: 141, stroke: '#000', 'stroke-width': 3 });
line(85.5, '#32b432', 3);
line(161.5, '#008000', 5);
line(311.5, '#32b432', 3);
line(398.5, '#ff7f40', 5);
line(402, '#0000a0', 2);
add(g, 'path', { d: 'M0 407.5H1204V425', fill: 'none', stroke: '#3434dc' });
line(428, '#32b432', 6);
line(434.5, '#32b432', 3);
add(g, 'path', { d: 'M0 454.5H1363.5V481.5H0', fill: 'none', stroke: '#f00', 'stroke-width': 3 });
add(g, 'rect', { x: 351.5, y: 508.5, width: '200%', height: 6, fill: 'none', stroke: '#0000a0', 'stroke-width': 3 });
line(536.5, '#0000a0', 3, 583, 603);
line(610.5, '#32b432', 3);
line(640, '#f00', 6);
line(710.5, '#f00', 5);
line(724.5, '#f00', 3, 814, 1119);
line(742.5, '#f00', 5);
line(761.5, '#f00', 3);
line(773.5, '#00f', 5, 814, 1119);
line(800.5, '#0000a0', 3);
line(811, '#f00', 8);
line(840.5, '#f00', 7);
line(877.5, '#f00', 3);

add(g, 'ellipse', { cx: 748, cy: 777, rx: 202, ry: 59, fill: 'none', stroke: '#000', 'stroke-width': 3, 'stroke-dasharray': '9 9' });
add(g, 'path', { d: 'M727 981l7-7 7 7 7-7 7 7-7 8 7 8-7 7-7-7-7 7-7-7 7-8z', fill: '#f00', stroke: '#a00' });

// notes
[[1161.5,520.5,671,122],[1194.5,649.5,558,66],[321.5,809.5,280,42],[766.5,685.5,244,33]].forEach(([x, y, width, height]) =>
  add(g, 'rect', { x, y, width, height, rx: 5, fill: 'rgba(255,255,255,.05)', stroke: '#4a7be0', 'stroke-width': 1.5 }));
label(1497, 549, 'Atencion todo y validacion con doji que no es lo mejor', '', 'note');
label(1497, 576, 'parece que nos hemos colocado encima de la Genial line', '', 'note');
label(1494, 603, 'Si fuera asi podriamos tener un pequeño impulso alcista', '', 'note');
label(1494, 630, 'quizas el mas importante de los ultimos dias desde el dia 9', '', 'note');
label(1474, 676, 'Rebote en apertura y entrada de fuerza posible', '', 'note2');
label(1474, 702, 'movimiento con impulsos de varios dias y 500 puntos', '', 'note2');
label(461, 838, 'Soporte muy importante', '', 'note');
label(774, 708, 'Muchas plumas y nada de fuerza!', '', 'small');
label(240, 87, 'Maximo Historico');
label(722, 499, 'Genial de Semanal');
label(53, 1008, 'IT-Finance.com - Real Time', '#000', 'plain');

// time axis
add(dates, 'line', { x1: 0, x2: '100%', y1: 0, y2: 0, stroke: '#768b95', 'stroke-width': 4 });
[[108,'25'],[180,'26'],[254,'27'],[327,'Mar'],[340],[413,'03'],[486,'04'],[558,'05'],[632,'06'],[706,'08'],[718],[791,'10'],[864,'11'],
 [937,'12'],[1010,'13'],[1084,'15'],[1096],[1169,'17'],[1242,'18'],[1315,'19'],[1388,'20'],[1461,'22'],[1473],[1547,'24'],[1620,'25'],
 [1694,'26'],[1766,'27']].forEach(([x, t]) => {
  add(dates, 'rect', { x: x - 51, y: 2, width: 1, height: 4, fill: '#768b95' });
  if (t) add(dates, 'text', { x: x - 50, y: 22, class: 'mid' }, t);
});

// price axis
add(prices, 'rect', { x: 0, y: 0, width: 2, height: 970, fill: '#768b95' });
for (let p = 25600; p >= 22600; p -= 200) {
  const y = Math.round(18 + (25600 - p) * .3024);
  add(prices, 'rect', { x: 2, y, width: 5, height: 1, fill: '#768b95' });
  if (p !== 23600) add(prices, 'text', { x: 11, y: y + 6 }, p.toLocaleString('en-US'));
}

function tag(y, h, w, fill, text, color, base) {
  add(prices, 'rect', { x: 8.5, y, width: w, height: h, fill, stroke: '#768b95', 'stroke-width': 1.5 });
  add(prices, 'text', { x: 11, y: base, fill: color }, text);
}
tag(611, 23, 75, '#eef2fb', '23,588.2', '#0000a0', 627);
tag(623, 23, 75, '#eef2fb', '23,554.7', '#009000', 640);
tag(585.5, 22, 75, '#ffd21c', '23,613.0', '#000', 603);
tag(638.5, 22, 75, '#dfe6f4', '23,540.5', '#a00000', 656);
add(prices, 'rect', { x: 8, y: 608, width: 67, height: 26, fill: '#93f093' });
add(prices, 'text', { x: 11, y: 628 }, '3h07m');
add(prices, 'path', { d: 'M2 620h5M2 623h5', stroke: '#0000a0' });
add(prices, 'path', { d: 'M2 636h5', stroke: '#009000' });
add(prices, 'path', { d: 'M2 641h5', stroke: '#a00000' });
```
